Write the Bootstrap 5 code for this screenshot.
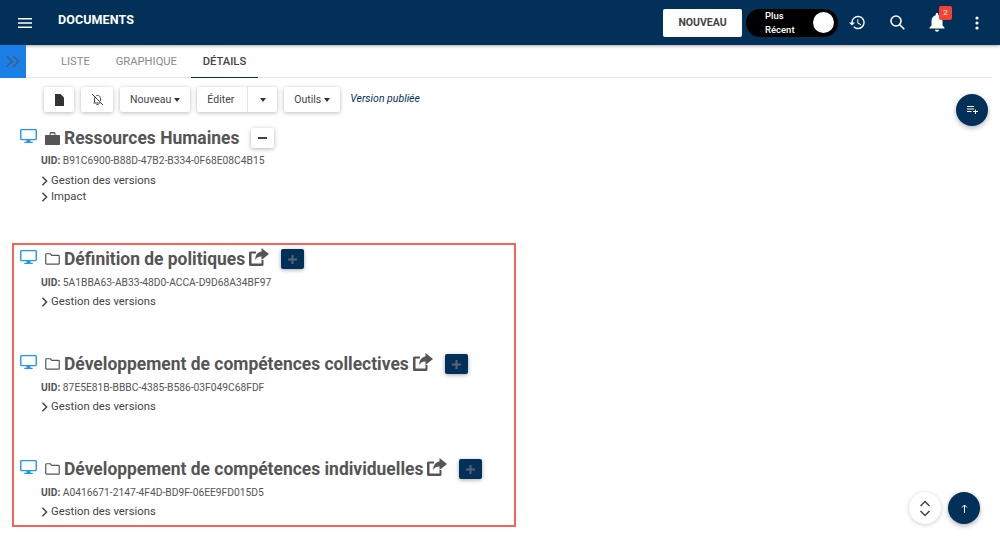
<!DOCTYPE html>
<html lang="fr">

<head>
    <meta charset="UTF-8">
    <title>Documents</title>
    <link href="https://cdn.jsdelivr.net/npm/bootstrap@5.3.0/dist/css/bootstrap.min.css" rel="stylesheet">
    <style>
        html, body { height: 539px; overflow: hidden; }
        body { font-family: Roboto, "Liberation Sans", sans-serif; background: #fff; color: #444; position: relative; }
        .top-bar { height: 45px; background: #023059; color: #fff; box-shadow: 0 1px 3px rgba(0,0,0,.35); padding-left: 18px; padding-right: 13px; }
        .app-title { font-size: 12.5px; font-weight: 700; margin-left: 26px; letter-spacing: .1px; margin-top: -5px; }
        .new-btn { width: 79px; height: 28px; background: #fff; color: #444; font-size: 10.5px; font-weight: 700; border-radius: 2px; margin-right: 4px; }
        .recent-toggle { width: 92px; height: 28px; background: #000; border-radius: 14px; padding: 0 4px 0 19px; font-size: 9.5px; line-height: 14px; font-weight: 500; margin-right: 9px; }
        .toggle-knob { width: 21px; height: 21px; border-radius: 50%; background: #fff; }
        .bar-icon { position: relative; display: flex; align-items: center; justify-content: center; width: 20px; margin-left: 20px; }
        .recent-toggle + .bar-icon { margin-left: 0; }
        .bell-badge { position: absolute; top: -7px; left: 12px; width: 13px; height: 14px; background: #f44336; border-radius: 2px; color: #fff; font-size: 8px; line-height: 14px; text-align: center; }
        .tabs-row { height: 33px; }
        .side-toggle { width: 26px; height: 33px; background: #1a7fe6; }
        .tab-strip { flex: 1; height: 33px; margin-right: 8px; border-bottom: 1px solid #e6e6e6; padding-left: 22px; font-size: 11.2px; }
        .tab-item { height: 33px; padding: 0 13px; color: #8a8a8a; line-height: 34px; }
        .tab-active { color: #444; font-weight: 500; border-bottom: 1px solid #023059; width: 67px; text-align: center; padding: 0; margin-left: 1px; }
        .tool-row { margin: 9px 0 0 44px; height: 25px; gap: 7px; }
        .tool-btn { height: 25px; background: #fff; box-shadow: 0 1px 4px rgba(0,0,0,.28); font-size: 10.5px; color: #444; border-radius: 2px; padding: 0 10px; }
        .tool-caret { display: inline-block; border-top: 4px solid #333; border-left: 3.5px solid transparent; border-right: 3.5px solid transparent; margin-left: 3px; }
        .tool-split { border-left: 1px solid #e6e6e6; width: 30px; padding: 0; margin-left: 13px; height: 25px; }
        .version-note { font-size: 10.5px; font-style: italic; color: #023059; margin: -1px 0 0 3px; }
        .doc-main { padding: 0 0 0 20px; }
        .doc-head { height: 26px; }
        .doc-name { font-size: 17.45px; font-weight: 700; color: #555; margin: 0; line-height: 26px; white-space: nowrap; }
        .doc-uid { font-size: 10.25px; color: #555; margin: 3px 0 0 21px; line-height: 14px; }
        .doc-entry .doc-uid { margin-top: 4px; }
        .doc-link { font-size: 11.3px; color: #444; margin-left: 21px; line-height: 16px; }
        .doc-link svg { margin-right: 3px; }
        .doc-top { margin-top: 13px; }
        .doc-top .doc-link:nth-of-type(3) { margin-top: 5px !important; }
        .red-frame { position: absolute; left: 12px; top: 243px; width: 504px; height: 284px; border: 2px solid #f7625a; pointer-events: none; }
        .doc-list { margin-top: 41px; }
        .doc-entry { height: 105px; }
        .add-btn { width: 23px; height: 20px; background: #023059; border-radius: 2px; box-shadow: 0 1px 4px rgba(0,0,0,.35); margin-left: 12px; }
        .minus-btn { width: 23px; height: 20px; background: #fff; border-radius: 2px; box-shadow: 0 1px 4px rgba(0,0,0,.3); margin-left: 12px; }
        .round-fab { position: absolute; width: 32px; height: 32px; border-radius: 50%; background: #023059; box-shadow: 0 2px 5px rgba(0,0,0,.3); }
        .fab-list { left: 956px; top: 94px; }
        .fab-top { left: 948px; top: 492px; }
        .fab-arrows { left: 909px; top: 492px; background: #fff; box-shadow: 0 1px 4px rgba(0,0,0,.2); }
    </style>
</head>

<body>
    <svg width="0" height="0" class="position-absolute">
        <symbol id="ico-screen" viewBox="0 0 18 16"><path fill="#2196f3" d="M1.500 0h15A1.500 1.500 0 0 1 18 1.500v9a1.500 1.500 0 0 1-1.500 1.500H11v1.500h2.500V15h-9v-1.500H7V12H1.500A1.500 1.500 0 0 1 0 10.500v-9A1.500 1.500 0 0 1 1.500 0zm0 1.400v9.200h15V1.400z"/></symbol>
        <symbol id="ico-folder" viewBox="0 0 16 13"><path fill="none" stroke="#555" stroke-width="1.300" d="M1.500.8h4.200l1.500 1.700h7.300c.4 0 .8.400.8.800v8c0 .4-.4.800-.8.800h-13c-.4 0-.8-.4-.8-.8V1.600c0-.4.400-.8.800-.8z"/></symbol>
        <symbol id="ico-share" viewBox="0 0 20 18"><path fill="#555" d="M1.500 3.500H7v2H2.500v10h10V12h2v4.500a1.500 1.500 0 0 1-1.500 1.500H1.500A1.500 1.500 0 0 1 0 16.500v-11.500a1.500 1.500 0 0 1 1.500-1.500z"/><path fill="#555" d="M12.500 0L20 6l-7.500 6V8.500c-3.200 0-5 1-6.300 3.500 0-4.800 2.300-7.900 6.300-8.500z"/></symbol>
        <symbol id="ico-chev" viewBox="0 0 8 12"><path fill="none" stroke="#444" stroke-width="1.800" d="M1.500 1l5 5-5 5"/></symbol>
    </svg>

    <header class="top-bar d-flex align-items-center">
        <svg width="14" height="10" viewBox="0 0 14 10" class="mt-n1"><path fill="#fff" d="M0 0h14v1.500H0zM0 4.200h14v1.500H0zM0 8.500h14V10H0z"/></svg>
        <div class="app-title">DOCUMENTS</div>
        <div class="ms-auto d-flex align-items-center">
            <div class="new-btn d-flex align-items-center justify-content-center">NOUVEAU</div>
            <div class="recent-toggle d-flex align-items-center justify-content-between">
                <span>Plus<br>Récent</span>
                <span class="toggle-knob"></span>
            </div>
            <div class="bar-icon"><svg width="16" height="15" viewBox="0 0 24 22"><path fill="#fff" d="M13.500 1a10 10 0 0 0-10 10H0l4.500 4.500L9 11H5.500a8 8 0 1 1 2.400 5.700l-1.400 1.400A10 10 0 1 0 13.500 1zM12.500 6v6l5 3 .8-1.300-4.300-2.500V6z"/></svg></div>
            <div class="bar-icon"><svg width="15" height="15" viewBox="0 0 15 15"><path fill="none" stroke="#fff" stroke-width="1.600" d="M6 1a5 5 0 1 1 0 10A5 5 0 0 1 6 1zM9.700 9.700l4.600 4.600"/></svg></div>
            <div class="bar-icon"><svg width="16" height="19" viewBox="0 0 16 19"><path fill="#fff" d="M8 0a1.300 1.300 0 0 1 1.300 1.300v.9C12 3 13.500 5.300 13.500 8v4.500l2 2V15.500H.5v-1l2-2V8C2.500 5.300 4 3 6.700 2.200v-.9A1.300 1.300 0 0 1 8 0zM6 16.800h4a2 2 0 0 1-4 0z"/></svg><span class="bell-badge">2</span></div>
            <div class="bar-icon"><svg width="4" height="14" viewBox="0 0 4 14"><circle cx="2" cy="2" r="1.600" fill="#fff"/><circle cx="2" cy="7" r="1.600" fill="#fff"/><circle cx="2" cy="12" r="1.600" fill="#fff"/></svg></div>
        </div>
    </header>

    <div class="tabs-row d-flex">
        <div class="side-toggle d-flex align-items-center justify-content-center">
            <svg width="14" height="11" viewBox="0 0 14 11"><path fill="none" stroke="#3f5f82" stroke-width="1.600" d="M1 .5L6 5.500 1 10.500M7.500.5L12.500 5.500 7.500 10.500"/></svg>
        </div>
        <div class="tab-strip d-flex">
            <div class="tab-item">LISTE</div>
            <div class="tab-item">GRAPHIQUE</div>
            <div class="tab-item tab-active">DÉTAILS</div>
        </div>
    </div>

    <div class="tool-row d-flex align-items-center">
        <div class="tool-btn d-flex align-items-center justify-content-center px-0" style="width:30px"><svg width="9" height="12" viewBox="0 0 9 12"><path fill="#333" d="M0 0h5.500L9 3.500V12H0z"/></svg></div>
        <div class="tool-btn d-flex align-items-center justify-content-center px-0" style="width:32px"><svg width="13" height="13" viewBox="0 0 13 13"><path fill="none" stroke="#444" stroke-width="1" d="M1 1l11 11M3.500 9.500V6c0-1 .3-1.700.7-2.300M5.300 2.600C7.500 1.700 9.500 3.500 9.500 6v2M2.500 10h7M5.500 11.500h2"/></svg></div>
        <div class="tool-btn d-flex align-items-center">Nouveau<span class="tool-caret"></span></div>
        <div class="tool-btn d-flex align-items-center pe-0">Éditer<span class="tool-split d-flex align-items-center justify-content-center"><span class="tool-caret m-0"></span></span></div>
        <div class="tool-btn d-flex align-items-center">Outils<span class="tool-caret"></span></div>
        <div class="version-note">Version publiée</div>
    </div>

    <main class="doc-main">
        <section class="doc-top">
            <div class="doc-head d-flex align-items-center">
                <svg width="17" height="15" class="me-2 mb-1"><use href="#ico-screen"/></svg>
                <svg width="15" height="13" viewBox="0 0 15 13" class="me-1"><path fill="#555" d="M1 3h3.500V1.500C4.500.7 5.200 0 6 0h3c.8 0 1.500.7 1.500 1.500V3H14c.6 0 1 .4 1 1v8c0 .6-.4 1-1 1H1c-.6 0-1-.4-1-1V4c0-.6.4-1 1-1zm4.500-1.500V3h4V1.500z"/></svg>
                <h1 class="doc-name">Ressources Humaines</h1>
                <div class="minus-btn d-flex align-items-center justify-content-center"><svg width="9" height="2"><path fill="#444" d="M0 0h9v2H0z"/></svg></div>
            </div>
            <div class="doc-uid"><b>UID:</b> B91C6900-B88D-47B2-B334-0F68E08C4B15</div>
            <div class="doc-link mt-1 d-flex align-items-center"><svg width="7" height="10"><use href="#ico-chev"/></svg>Gestion des versions</div>
            <div class="doc-link d-flex align-items-center"><svg width="7" height="10"><use href="#ico-chev"/></svg>Impact</div>
        </section>

        <div class="doc-list">
            <section class="doc-entry">
                <div class="doc-head d-flex align-items-center">
                    <svg width="17" height="15" class="me-2 mb-1"><use href="#ico-screen"/></svg>
                    <svg width="15" height="12" class="me-1"><use href="#ico-folder"/></svg>
                    <h2 class="doc-name">Définition de politiques</h2>
                    <svg width="20" height="18" class="ms-1 mb-1"><use href="#ico-share"/></svg>
                    <div class="add-btn d-flex align-items-center justify-content-center"><svg width="9" height="9"><path fill="#5a6470" d="M3.500 0h2v3.500H9v2H5.500V9h-2V5.500H0v-2h3.500z"/></svg></div>
                </div>
                <div class="doc-uid"><b>UID:</b> 5A1BBA63-AB33-48D0-ACCA-D9D68A34BF97</div>
                <div class="doc-link mt-1 d-flex align-items-center"><svg width="7" height="10"><use href="#ico-chev"/></svg>Gestion des versions</div>
            </section>
            <section class="doc-entry">
                <div class="doc-head d-flex align-items-center">
                    <svg width="17" height="15" class="me-2 mb-1"><use href="#ico-screen"/></svg>
                    <svg width="15" height="12" class="me-1"><use href="#ico-folder"/></svg>
                    <h2 class="doc-name">Développement de compétences collectives</h2>
                    <svg width="20" height="18" class="ms-1 mb-1"><use href="#ico-share"/></svg>
                    <div class="add-btn d-flex align-items-center justify-content-center"><svg width="9" height="9"><path fill="#5a6470" d="M3.500 0h2v3.500H9v2H5.500V9h-2V5.500H0v-2h3.500z"/></svg></div>
                </div>
                <div class="doc-uid"><b>UID:</b> 87E5E81B-BBBC-4385-B586-03F049C68FDF</div>
                <div class="doc-link mt-1 d-flex align-items-center"><svg width="7" height="10"><use href="#ico-chev"/></svg>Gestion des versions</div>
            </section>
            <section class="doc-entry">
                <div class="doc-head d-flex align-items-center">
                    <svg width="17" height="15" class="me-2 mb-1"><use href="#ico-screen"/></svg>
                    <svg width="15" height="12" class="me-1"><use href="#ico-folder"/></svg>
                    <h2 class="doc-name">Développement de compétences individuelles</h2>
                    <svg width="20" height="18" class="ms-1 mb-1"><use href="#ico-share"/></svg>
                    <div class="add-btn d-flex align-items-center justify-content-center"><svg width="9" height="9"><path fill="#5a6470" d="M3.500 0h2v3.500H9v2H5.500V9h-2V5.500H0v-2h3.500z"/></svg></div>
                </div>
                <div class="doc-uid"><b>UID:</b> A0416671-2147-4F4D-BD9F-06EE9FD015D5</div>
                <div class="doc-link mt-1 d-flex align-items-center"><svg width="7" height="10"><use href="#ico-chev"/></svg>Gestion des versions</div>
            </section>
        </div>
    </main>

    <div class="red-frame"></div>

    <div class="round-fab fab-list d-flex align-items-center justify-content-center"><svg width="11" height="8" viewBox="0 0 11 8"><path fill="#fff" d="M0 0h7v1H0zM0 2.500h7v1H0zM0 5h4.500v1H0zM8 3.500h1V5h2v1H9v2H8V6H6V5h2z"/></svg></div>
    <div class="round-fab fab-arrows d-flex align-items-center justify-content-center"><svg width="12" height="17" viewBox="0 0 12 17"><path fill="none" stroke="#444" stroke-width="1.500" d="M1.500 6L6 1.500 10.500 6M1.500 11L6 15.500 10.500 11"/></svg></div>
    <div class="round-fab fab-top d-flex align-items-center justify-content-center"><svg width="7" height="9" viewBox="0 0 7 9"><path fill="none" stroke="#fff" d="M3.500 9V1M1 3.500L3.500 1 6 3.500"/></svg></div>

    <script src="https://cdn.jsdelivr.net/npm/bootstrap@5.3.0/dist/js/bootstrap.bundle.min.js"></script>
</body>

</html>
